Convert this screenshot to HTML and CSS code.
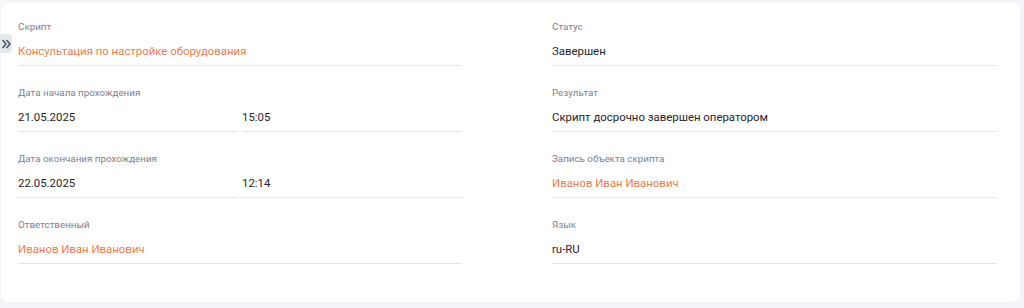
FILE: index.html
```html
<!DOCTYPE html>
<html lang="ru">
<head>
    <meta charset="UTF-8">
    <meta name="viewport" content="width=device-width, initial-scale=1.0">
    <title>Карточка скрипта</title>
    <link rel="stylesheet" href="styles.css">
</head>
<body>
    <div class="card">
        <button class="side-toggle" title="Развернуть">
            <svg width="9" height="10" viewBox="0 0 9 10" fill="none" stroke="#4b5563" stroke-width="1.6" stroke-linecap="round" stroke-linejoin="round">
                <path d="M1 1.5 L4 5 L1 8.5"/>
                <path d="M5 1.5 L8 5 L5 8.5"/>
            </svg>
        </button>

        <div class="grid">
            <div class="column">
                <div class="field">
                    <div class="label">Скрипт</div>
                    <div class="value link">Консультация по настройке оборудования</div>
                </div>
                <div class="field">
                    <div class="label">Дата начала прохождения</div>
                    <div class="pair">
                        <div class="value">21.05.2025</div>
                        <div class="value">15:05</div>
                    </div>
                </div>
                <div class="field">
                    <div class="label">Дата окончания прохождения</div>
                    <div class="pair">
                        <div class="value">22.05.2025</div>
                        <div class="value">12:14</div>
                    </div>
                </div>
                <div class="field">
                    <div class="label">Ответственный</div>
                    <div class="value link">Иванов Иван Иванович</div>
                </div>
            </div>

            <div class="column">
                <div class="field">
                    <div class="label">Статус</div>
                    <div class="value">Завершен</div>
                </div>
                <div class="field">
                    <div class="label">Результат</div>
                    <div class="value">Скрипт досрочно завершен оператором</div>
                </div>
                <div class="field">
                    <div class="label">Запись объекта скрипта</div>
                    <div class="value link">Иванов Иван Иванович</div>
                </div>
                <div class="field">
                    <div class="label">Язык</div>
                    <div class="value">ru-RU</div>
                </div>
            </div>
        </div>
    </div>
</body>
</html>
```

FILE: styles.css
```css
body {
    margin: 0;
    padding: 3px 4px 8px 1px;
    background-color: #f3f5f9;
    font-family: Roboto, "Liberation Sans", Arial, sans-serif;
    color: #1f232b;
}
.card {
    position: relative;
    background-color: #ffffff;
    border-radius: 8px;
    padding: 17px 24px 38px 17px;
}
.side-toggle {
    position: absolute;
    left: -1px;
    top: 31px;
    width: 12px;
    height: 19px;
    padding: 0;
    border: none;
    border-radius: 0 4px 4px 0;
    background-color: #e4e7ee;
    display: flex;
    align-items: center;
    justify-content: center;
    cursor: pointer;
}
.grid {
    display: grid;
    grid-template-columns: 444px 444px;
    column-gap: 90px;
}
.column {
    display: flex;
    flex-direction: column;
    gap: 20px;
}
.label {
    font-size: 9.8px;
    line-height: 14px;
    color: #7b8190;
    margin-bottom: 4px;
}
.value {
    font-size: 11.4px;
    line-height: 27px;
    height: 27px;
    border-bottom: 1px solid #e3e5ec;
    white-space: nowrap;
}
.value.link {
    color: #f47a4c;
}
.pair {
    display: grid;
    grid-template-columns: 219px 220px;
    column-gap: 5px;
}
```
